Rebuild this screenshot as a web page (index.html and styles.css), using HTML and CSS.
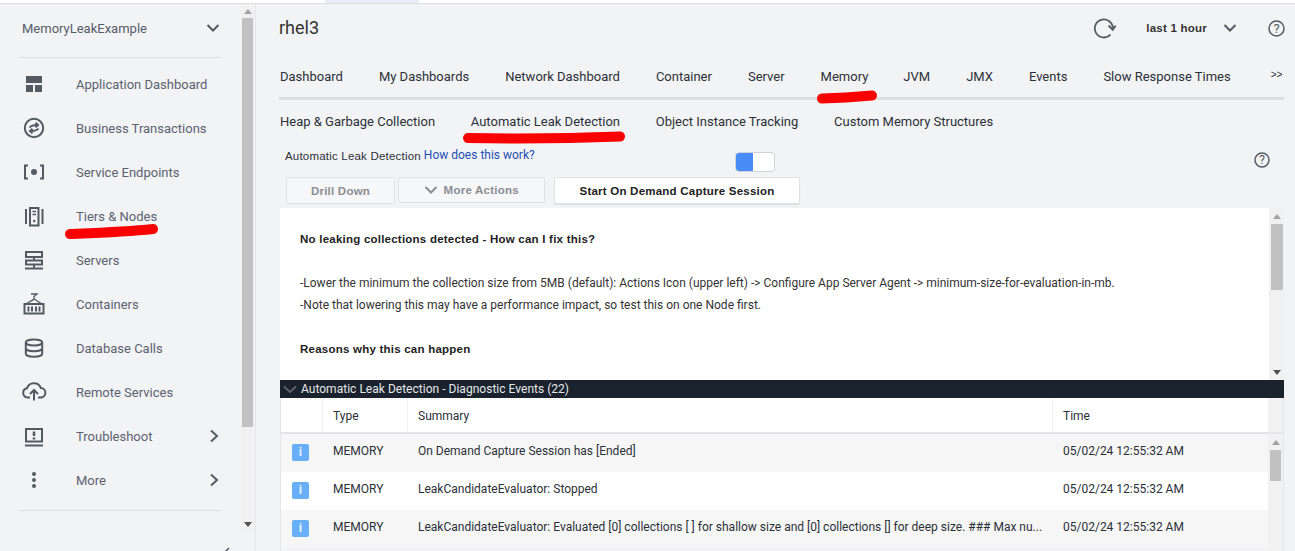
FILE: index.html
```html
<!DOCTYPE html>
<html lang="en">
<head>
    <meta charset="UTF-8">
    <title>rhel3 - Automatic Leak Detection</title>
    <link rel="stylesheet" href="styles.css">
</head>
<body>
    <div class="top-strip"><span class="top-tab"></span></div>
    <div class="app">
        <!-- Left navigation -->
        <aside class="sidebar">
            <div class="side-content">
                <div class="app-picker">
                    <span>MemoryLeakExample</span>
                    <svg class="chev" width="14" height="14" viewBox="0 0 14 14"><path d="M1.500 4l5.500 5.500L12.500 4" /></svg>
                </div>
                <ul class="nav">
                    <li>
                        <svg class="nav-icon" viewBox="0 0 22 22"><path class="fill" d="M3 3h16v7H3zM3 12h7v7H3zM12 12h7v7h-7z"/></svg>
                        <span>Application Dashboard</span>
                    </li>
                    <li>
                        <svg class="nav-icon" viewBox="0 0 22 22"><circle cx="11" cy="11" r="9.200"/><path d="M6.500 10.500C8 8.500 10 8 14.500 8M12.500 5.800L15 8l-2.500 2.200M15.500 11.500C14 13.500 12 14 7.500 14M9.500 11.800L7 14l2.500 2.200"/></svg>
                        <span>Business Transactions</span>
                    </li>
                    <li>
                        <svg class="nav-icon" viewBox="0 0 22 22"><path d="M5 4.500H2v13h3M17 4.500h3v13h-3"/><circle class="fill" cx="11" cy="11" r="3"/></svg>
                        <span>Service Endpoints</span>
                    </li>
                    <li>
                        <svg class="nav-icon" viewBox="0 0 22 22"><path d="M3 4v15M19.500 4v15"/><rect x="7" y="3" width="8.500" height="17.500"/><path class="thin" d="M9.500 6.500h3.500M9.500 9.500h3.500"/><circle class="fill" cx="11.200" cy="16" r="1.200"/></svg>
                        <span>Tiers &amp; Nodes</span>
                    </li>
                    <li>
                        <svg class="nav-icon" viewBox="0 0 22 22"><rect x="3" y="3" width="16" height="5"/><rect x="3" y="11.500" width="16" height="4"/><path d="M11 8v3.500M11 15.500v3M2 19.500h18"/></svg>
                        <span>Servers</span>
                    </li>
                    <li>
                        <svg class="nav-icon" viewBox="0 0 22 22"><rect x="1.500" y="11" width="19" height="9.500"/><path d="M5.500 13.500v5M9 13.500v5M13 13.500v5M16.500 13.500v5"/><path class="thin" d="M3 11l8-5 8 5M11 6V3.500M8 1h6l-3.500 3M8.500 8l2.500-2"/></svg>
                        <span>Containers</span>
                    </li>
                    <li>
                        <svg class="nav-icon" viewBox="0 0 22 22"><ellipse cx="11" cy="5.500" rx="8.200" ry="3"/><path d="M2.800 5.500v11.200c0 1.700 3.700 3 8.200 3s8.200-1.300 8.200-3V5.500M2.800 11.200c0 1.700 3.700 3 8.200 3s8.200-1.300 8.200-3"/></svg>
                        <span>Database Calls</span>
                    </li>
                    <li>
                        <svg class="nav-icon cloud" viewBox="0 0 26 26"><path d="M9 18.500H6.500a4.700 4.700 0 0 1-.5-9.300A7.300 7.300 0 0 1 19.800 9a4.700 4.700 0 0 1-.3 9.500H17M13 21.500v-10M9 15l4-4 4 4"/></svg>
                        <span>Remote Services</span>
                    </li>
                    <li>
                        <svg class="nav-icon" viewBox="0 0 22 22"><rect x="3" y="4" width="16" height="12.500"/><path d="M2 20.500h18"/><path class="thick" d="M11 6.500v4.500M11 12.500v2"/></svg>
                        <span>Troubleshoot</span>
                        <svg class="arrow" width="10" height="14" viewBox="0 0 10 14"><path d="M2 1.500L8 7l-6 5.500"/></svg>
                    </li>
                    <li>
                        <svg class="nav-icon" viewBox="0 0 22 22"><circle class="fill" cx="11" cy="5" r="2"/><circle class="fill" cx="11" cy="11" r="2"/><circle class="fill" cx="11" cy="17" r="2"/></svg>
                        <span>More</span>
                        <svg class="arrow" width="10" height="14" viewBox="0 0 10 14"><path d="M2 1.500L8 7l-6 5.500"/></svg>
                    </li>
                </ul>
                <svg class="collapse" width="8" height="6" viewBox="0 0 8 6"><path d="M6 1L2 5"/></svg>
            </div>
            <div class="scrollbar side-scroll">
                <span class="up"></span>
                <span class="thumb"></span>
                <span class="down"></span>
            </div>
        </aside>

        <main class="main">
            <header class="title-row">
                <h1>rhel3</h1>
                <svg class="refresh" width="24" height="24" viewBox="0 0 24 24"><path d="M18.500 18.500A9 9 0 1 1 20.800 12M16.500 9.500l4.200 4.300 3-4.300"/></svg>
                <span class="range">last 1 hour</span>
                <svg class="chev" width="14" height="14" viewBox="0 0 14 14"><path d="M1.500 4l5.500 5.500L12.500 4" /></svg>
                <svg class="help-big" width="17" height="17" viewBox="0 0 17 17"><circle cx="8.500" cy="8.500" r="7.500"/><text x="8.500" y="13" text-anchor="middle">?</text></svg>
            </header>

            <nav class="tabs">
                <a>Dashboard</a>
                <a>My Dashboards</a>
                <a>Network Dashboard</a>
                <a>Container</a>
                <a>Server</a>
                <a class="active">Memory</a>
                <a>JVM</a>
                <a>JMX</a>
                <a>Events</a>
                <a>Slow Response Times</a>
                <b class="more-tabs">&gt;&gt;</b>
            </nav>
            <nav class="subtabs">
                <a>Heap &amp; Garbage Collection</a>
                <a>Automatic Leak Detection</a>
                <a>Object Instance Tracking</a>
                <a>Custom Memory Structures</a>
            </nav>

            <div class="info-row">
                <span class="info-label">Automatic Leak Detection</span>
                <a class="how">How does this work?</a>
                <span class="toggle"><i></i></span>
                <svg class="help" width="16" height="16" viewBox="0 0 16 16"><circle cx="8" cy="8" r="7"/><text x="8" y="12" text-anchor="middle">?</text></svg>
            </div>

            <div class="actions">
                <button class="btn disabled drill">Drill Down</button>
                <button class="btn disabled more">
                    <svg width="14" height="10" viewBox="0 0 14 10"><path d="M1.500 2l5.500 5.500L12.500 2"/></svg>
                    More Actions
                </button>
                <button class="btn capture">Start On Demand Capture Session</button>
            </div>

            <section class="notes">
                <div class="notes-text">
                    <p class="strong">No leaking collections detected - How can I fix this?</p>
                    <p class="gap">-Lower the minimum the collection size from 5MB (default): Actions Icon (upper left) -&gt; Configure App Server Agent -&gt; minimum-size-for-evaluation-in-mb.</p>
                    <p>-Note that lowering this may have a performance impact, so test this on one Node first.</p>
                    <p class="strong gap">Reasons why this can happen</p>
                </div>
                <div class="scrollbar notes-scroll">
                    <span class="up"></span>
                    <span class="thumb"></span>
                    <span class="down"></span>
                </div>
            </section>

            <section class="events">
                <div class="events-head">
                    <svg width="14" height="9" viewBox="0 0 14 9"><path d="M1 1.500l6 5.500 6-5.500"/></svg>
                    Automatic Leak Detection - Diagnostic Events (22)
                </div>
                <div class="grid-head">
                    <div class="col-icon"></div>
                    <div class="col-type">Type</div>
                    <div class="col-summary">Summary</div>
                    <div class="col-time">Time</div>
                    <div class="gutter"></div>
                </div>
                <div class="grid-body">
                    <div class="rows">
                        <div class="row">
                            <div class="col-icon"><span class="info-icon">i</span></div>
                            <div class="col-type">MEMORY</div>
                            <div class="col-summary">On Demand Capture Session has [Ended]</div>
                            <div class="col-time">05/02/24 12:55:32 AM</div>
                        </div>
                        <div class="row">
                            <div class="col-icon"><span class="info-icon">i</span></div>
                            <div class="col-type">MEMORY</div>
                            <div class="col-summary">LeakCandidateEvaluator: Stopped</div>
                            <div class="col-time">05/02/24 12:55:32 AM</div>
                        </div>
                        <div class="row">
                            <div class="col-icon"><span class="info-icon">i</span></div>
                            <div class="col-type">MEMORY</div>
                            <div class="col-summary">LeakCandidateEvaluator: Evaluated [0] collections [ ] for shallow size and [0] collections [] for deep size. ### Max nu...</div>
                            <div class="col-time">05/02/24 12:55:32 AM</div>
                        </div>
                    </div>
                    <div class="scrollbar rows-scroll">
                        <span class="up"></span>
                        <span class="thumb"></span>
                    </div>
                </div>
            </section>
        </main>
    </div>

    <!-- Hand drawn red marks on top of the screenshot -->
    <svg class="marks" width="1295" height="551" viewBox="0 0 1295 551">
        <path d="M70 234C95 233 125 232 153 229"/>
        <path d="M822 98.500C840 98 855 97 872 95.500"/>
        <path d="M468 138C520 139 570 138.500 620 136.500"/>
    </svg>
</body>
</html>
```

FILE: styles.css
```css
html, body {
    margin: 0;
    height: 551px;
    overflow: hidden;
}
body {
    font-family: Roboto, "Liberation Sans", sans-serif;
    font-size: 13px;
    color: #2b3038;
    background-color: #f2f3f5;
}
svg path, svg circle, svg rect, svg ellipse {
    fill: none;
    stroke: #555a62;
    stroke-width: 2;
}
svg .fill {
    fill: #555a62;
    stroke: none;
}
svg .thin {
    stroke-width: 1.300;
}
svg text {
    font-family: Roboto, sans-serif;
    font-size: 12px;
    fill: #555a62;
}
.top-strip {
    height: 3px;
    background: #fff;
    border-bottom: 1px solid #dcdcdc;
    padding-left: 325px;
}
.top-tab {
    display: block;
    width: 94px;
    height: 3px;
    background: #ebebfa;
}
.app {
    display: flex;
    height: 547px;
}

/* sidebar */
.sidebar {
    width: 255px;
    display: flex;
    justify-content: space-between;
    border-right: 1px solid #e4e6e9;
    flex-shrink: 0;
}
.side-content {
    width: 204px;
    margin-left: 18px;
    position: relative;
}
.app-picker {
    height: 54px;
    box-sizing: border-box;
    border-bottom: 1px solid #dcdfe2;
    display: flex;
    justify-content: space-between;
    align-items: flex-start;
    padding: 17px 2px 0 4px;
    color: #555c68;
    line-height: 16px;
}
.nav {
    list-style: none;
    margin: 0;
    padding: 4px 0 8px;
    border-bottom: 1px solid #dcdfe2;
}
.nav li {
    height: 44px;
    display: flex;
    align-items: center;
    color: #5b6270;
    position: relative;
}
.nav-icon {
    width: 22px;
    height: 22px;
    margin-left: 5px;
    margin-right: 31px;
    flex-shrink: 0;
}
.nav-icon.cloud {
    width: 26px;
    height: 26px;
    margin-left: 3px;
    margin-right: 29px;
}
.nav .thick {
    stroke-width: 2.500;
}
.arrow {
    position: absolute;
    right: 3px;
    top: 15px;
}
.collapse {
    position: absolute;
    left: 205px;
    top: 543px;
}
.collapse path {
    stroke-width: 1.500;
}
.scrollbar {
    background: #f1f1f1;
    display: flex;
    flex-direction: column;
    align-items: center;
    flex-shrink: 0;
    box-sizing: border-box;
}
.scrollbar .thumb {
    display: block;
    background: #c1c1c1;
    width: 100%;
}
.scrollbar .up {
    width: 0;
    height: 0;
    border: 4px solid transparent;
    border-top: 0;
    border-bottom: 5px solid #a3a3a3;
    margin: 6px 0 5px;
}
.scrollbar .down {
    width: 0;
    height: 0;
    border: 4px solid transparent;
    border-bottom: 0;
    border-top: 5px solid #505050;
    margin-top: auto;
    margin-bottom: 5px;
}
.side-scroll {
    width: 13px;
    height: 528px;
    margin-right: 1px;
}
.side-scroll .up {
    margin: 5px 0 4px;
}
.side-scroll .thumb {
    height: 409px;
    width: 11px;
}

/* main column */
.main {
    flex: 1;
    min-width: 0;
    padding-left: 23px;
    padding-right: 11px;
}
.title-row {
    height: 49px;
    display: flex;
    align-items: flex-start;
    padding-top: 12px;
    box-sizing: border-box;
}
h1 {
    margin: 1px 0 0;
    font-size: 18px;
    font-weight: 400;
    line-height: 22px;
    flex: 1;
    color: #333;
}
.refresh {
    margin-right: 30px;
}
.refresh path {
    stroke-width: 1.800;
}
.range {
    font-family: "Liberation Sans", sans-serif;
    font-weight: 700;
    font-size: 11.500px;
    letter-spacing: 0.230px;
    line-height: 24px;
    margin-right: 16px;
    color: #333;
}
.title-row .chev {
    margin: 5px 31px 0 0;
}
.help-big {
    margin: 4px -1px 0 0;
}
.help-big circle, .help circle {
    stroke-width: 1.500;
}
.help-big text {
    font-size: 13px;
}
.tabs {
    display: flex;
    gap: 36px;
    align-items: center;
    height: 40px;
    padding: 4px 0 0 1px;
    border-bottom: 3px solid #dcdfe2;
    line-height: 16px;
}
.tabs a, .subtabs a {
    white-space: nowrap;
}
.tabs .active {
    margin-right: -1px;
}
.more-tabs {
    font-family: "Liberation Sans", sans-serif;
    font-size: 10px;
    font-weight: 400;
    margin: -4px 0 0 4px;
}
.subtabs {
    display: flex;
    gap: 35.700px;
    height: 44px;
    align-items: center;
    padding-left: 1px;
    line-height: 16px;
}
.info-row {
    display: flex;
    height: 33px;
    padding-left: 6px;
    font-size: 12px;
    line-height: 22px;
    position: relative;
}
.info-label {
    font-family: "Liberation Sans", sans-serif;
    font-size: 11.500px;
    letter-spacing: 0.200px;
    line-height: 24px;
}
.how {
    color: #1f4fb4;
    margin-left: 3px;
    line-height: 23px;
}
.toggle {
    position: absolute;
    left: 456px;
    top: 8px;
    box-sizing: border-box;
    width: 40px;
    height: 20px;
    border: 1px solid #cfd3d8;
    border-radius: 4px;
    background: #fff;
}
.toggle i {
    display: block;
    width: 17px;
    height: 18px;
    background: #4a8cf7;
    border-radius: 3px 0 0 3px;
}
.info-row .help {
    position: absolute;
    right: 14px;
    top: 8px;
}
.actions {
    display: flex;
    height: 31px;
    padding-left: 7px;
}
.btn {
    font-family: "Liberation Sans", sans-serif;
    font-size: 11.500px;
    letter-spacing: 0.230px;
    font-weight: 700;
    height: 27px;
    box-sizing: border-box;
    border: 1px solid #dfe1e4;
    border-radius: 2px;
    background: #fff;
    color: #222;
    padding: 0;
}
.btn.disabled {
    background: #f6f7f8;
    color: #8a8d92;
    margin-right: 3px;
}
.drill {
    width: 109px;
}
.more {
    width: 147px;
    height: 26px;
    margin-right: 9px !important;
}
.more svg {
    margin-right: 2px;
    vertical-align: -1px;
}
.more path {
    stroke: #8a8d92;
}
.capture {
    width: 246px;
    box-shadow: 0 1px 1px rgba(0, 0, 0, 0.08);
}

/* notes panel */
.notes {
    height: 172px;
    margin-left: 1px;
    background: #fff;
    display: flex;
    justify-content: space-between;
    overflow: hidden;
}
.notes-text {
    padding: 20px 0 0 20px;
    font-size: 12px;
    line-height: 22px;
    color: #333;
}
.notes-text p {
    margin: 0;
}
.notes-text .strong {
    font-family: "Liberation Sans", sans-serif;
    font-size: 11.500px;
    letter-spacing: 0.230px;
    font-weight: 700;
    color: #222;
}
.notes-text .gap {
    margin-top: 22px;
}
.notes-scroll {
    width: 15px;
}
.notes-scroll .thumb {
    width: 12px;
    height: 66px;
}

/* events grid */
.events {
    margin-left: 1px;
}
.events-head {
    height: 18px;
    background: #1a222d;
    color: #e6e8ea;
    font-size: 12px;
    letter-spacing: 0.020px;
    line-height: 18px;
    display: flex;
    align-items: center;
    padding-left: 3px;
}
.events-head svg {
    margin-right: 4px;
}
.events-head path {
    stroke: #5c636d;
}
.grid-head, .row {
    display: flex;
    font-size: 12px;
}
.grid-head {
    height: 36px;
    box-sizing: border-box;
    background: #fff;
    border-bottom: 2px solid #e3e5e8;
    border-left: 1px solid #e3e5e8;
    border-right: 1px solid #e3e5e8;
    line-height: 36px;
}
.grid-head > div {
    border-right: 1px solid #eef0f2;
    box-sizing: border-box;
}
.col-icon {
    width: 42px;
    flex-shrink: 0;
}
.col-type {
    width: 85px;
    flex-shrink: 0;
    padding-left: 10px;
    box-sizing: border-box;
}
.col-summary {
    width: 645px;
    flex-shrink: 0;
    padding-left: 10px;
    box-sizing: border-box;
    white-space: nowrap;
}
.col-time {
    padding-left: 10px;
    flex: 1;
    box-sizing: border-box;
}
.grid-head .col-time {
    border-right: 0;
}
.grid-head .gutter {
    width: 15px;
    flex-shrink: 0;
    border-right: 0;
    background: #f1f1f1;
}
.grid-body {
    display: flex;
    height: 120px;
    border-left: 1px solid #e3e5e8;
    border-right: 1px solid #e3e5e8;
}
.rows {
    flex: 1;
    min-width: 0;
}
.row {
    height: 38px;
    line-height: 34px;
    background: #fff;
}
.row:nth-child(odd) {
    background: #f6f6f6;
}
.info-icon {
    display: block;
    width: 17px;
    height: 17px;
    margin: 10px 0 0 11px;
    background: #69aff8;
    border-radius: 2px;
    color: #e8f3fe;
    font-family: "Liberation Sans", sans-serif;
    font-weight: 700;
    font-size: 12px;
    line-height: 17px;
    text-align: center;
}
.rows-scroll {
    width: 15px;
}
.rows-scroll .thumb {
    width: 11px;
    height: 31px;
}

/* red marker strokes */
.marks {
    position: absolute;
    left: 0;
    top: 0;
    pointer-events: none;
}
.marks path {
    stroke: #fa0000;
    stroke-width: 10;
    stroke-linecap: round;
}
```
